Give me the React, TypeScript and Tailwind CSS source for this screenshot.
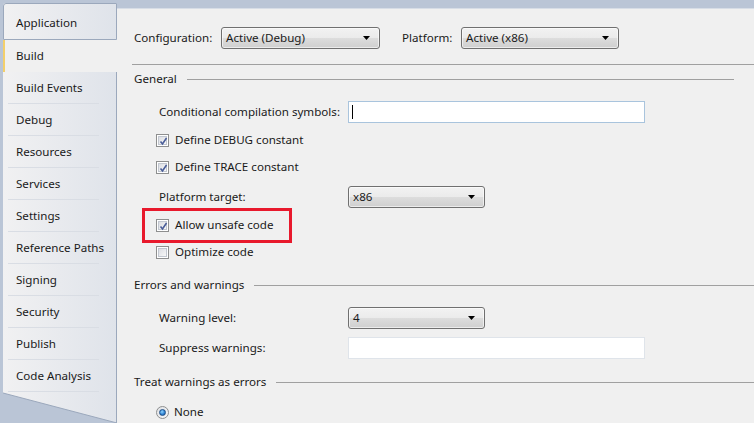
import React from "react";

const tabs = [
  "Application",
  "Build",
  "Build Events",
  "Debug",
  "Resources",
  "Services",
  "Settings",
  "Reference Paths",
  "Signing",
  "Security",
  "Publish",
  "Code Analysis",
];

function Arrow() {
  return (
    <svg width="7" height="4" viewBox="0 0 7 4" className="shrink-0">
      <polygon points="0,0 7,0 3.5,4" fill="#000" />
    </svg>
  );
}

function Select({ value, width }: { value: string; width: string }) {
  return (
    <div
      className={`${width} flex h-[22px] items-center justify-between rounded-[3px] border border-[#707070] bg-[linear-gradient(#f2f2f2,#ebebeb_50%,#dddddd_50%,#cfcfcf)] pl-[4px] pr-[9px] shadow-[inset_0_0_0_1px_rgba(255,255,255,0.6)]`}
    >
      <span>{value}</span>
      <Arrow />
    </div>
  );
}

function Check({ checked }: { checked: boolean }) {
  return (
    <div className="flex h-[13px] w-[13px] shrink-0 items-center justify-center border border-[#8e8f8f] bg-white p-[1px]">
      <div className="relative h-full w-full border border-[#c2c7d0] bg-[linear-gradient(135deg,#dcdee3,#f7f7f7)]">
        {checked && (
          <svg width="9" height="9" viewBox="0 0 9 9" className="absolute left-[0px] top-[0px]">
            <path d="M1.5 4.5 L3.5 7 L7.5 1" stroke="#4a5d98" strokeWidth="1.6" fill="none" />
          </svg>
        )}
      </div>
    </div>
  );
}

function CheckRow({ label, checked }: { label: string; checked: boolean }) {
  return (
    <div className="flex h-[20px] items-center gap-[6px] pl-[39px]">
      <Check checked={checked} />
      <span>{label}</span>
    </div>
  );
}

function Heading({ label, lineRight }: { label: string; lineRight: string }) {
  return (
    <div className={`flex h-[14px] items-center gap-[10px] pl-[17px] ${lineRight}`}>
      <span className="whitespace-nowrap">{label}</span>
      <div className="h-px flex-1 bg-[#a0a0a0]" />
    </div>
  );
}

export default function App() {
  return (
    <div className="flex h-[423px] w-[754px] overflow-hidden bg-[#bac5d6] text-[11.6px] leading-none text-[#1a1a1a] [font-family:'Noto_Sans',sans-serif]">
      {/* tab column */}
      <div className="flex w-[117px] shrink-0 flex-col pl-[3px] pt-[3px]">
        <div className="flex flex-col rounded-tl-[3px] bg-[linear-gradient(90deg,#f1f1f2,#dfe3ea)]">
          {tabs.map((t, i) => {
            if (t === "Application")
              return (
                <div
                  key={t}
                  className="flex h-[37px] items-center rounded-tl-[3px] border-b border-l border-r border-t border-[#9ba8bc] pl-[12px] pt-[3px]"
                >
                  {t}
                </div>
              );
            if (t === "Build")
              return (
                <div
                  key={t}
                  className="-mr-px flex h-[32px] items-center border-l-2 border-[#f3cf6a] bg-[#f0f0f0] pl-[11px]"
                >
                  {t}
                </div>
              );
            return (
              <div key={t} className="flex h-[32px] flex-col border-r border-[#9ba8bc]">
                <div className="flex flex-1 items-center pl-[13px]">{t}</div>
                {i < tabs.length && <div className="mx-[5px] mr-[17px] h-px bg-[#d9dde4]" />}
              </div>
            );
          })}
        </div>
        <div className="relative h-[31px] border-r border-[#9ba8bc] bg-[linear-gradient(90deg,#f1f1f2,#dfe3ea)]">
          <svg width="114" height="31" viewBox="0 0 114 31" className="absolute left-0 top-0">
            <polygon points="0,1 114,31 0,31" fill="#bac5d6" />
            <line x1="0" y1="1" x2="114" y2="31" stroke="#9ba8bc" strokeWidth="1" />
          </svg>
        </div>
      </div>

      {/* content panel */}
      <div className="mt-[8px] flex flex-1 flex-col border-t border-[#d7dde6] bg-[#f0f0f0]">
        <div className="mt-[18px] flex items-center pl-[17px]">
          <span className="w-[87px]">Configuration:</span>
          <Select value="Active (Debug)" width="w-[159px]" />
          <span className="ml-[22px] w-[59px]">Platform:</span>
          <Select value="Active (x86)" width="w-[158px]" />
        </div>

        <div className="ml-[15px] mt-[15px] h-px bg-[#a0a0a0]" />

        <div className="mt-[7px]">
          <Heading label="General" lineRight="pr-[20px]" />
        </div>

        <div className="mt-[15px] flex items-center pl-[42px]">
          <span className="w-[189px]">Conditional compilation symbols:</span>
          <div className="flex h-[22px] w-[297px] items-center border border-[#a9c4dd] bg-white pl-[3px]">
            <div className="h-[14px] w-px bg-black" />
          </div>
        </div>

        <div className="mt-[7px]">
          <CheckRow label="Define DEBUG constant" checked />
        </div>
        <div className="mt-[7px]">
          <CheckRow label="Define TRACE constant" checked />
        </div>

        <div className="mt-[9px] flex items-center pl-[42px]">
          <span className="w-[189px]">Platform target:</span>
          <Select value="x86" width="w-[137px]" />
        </div>

        <div className="relative mt-[7px]">
          <CheckRow label="Allow unsafe code" checked />
          <div className="absolute left-[25px] top-[-7px] h-[35px] w-[150px] border-[3px] border-[#e8192c]" />
        </div>
        <div className="mt-[7px]">
          <CheckRow label="Optimize code" checked={false} />
        </div>

        <div className="mt-[16px]">
          <Heading label="Errors and warnings" lineRight="" />
        </div>

        <div className="mt-[15px] flex items-center pl-[42px]">
          <span className="w-[189px]">Warning level:</span>
          <Select value="4" width="w-[137px]" />
        </div>

        <div className="mt-[8px] flex items-center pl-[42px]">
          <span className="w-[189px]">Suppress warnings:</span>
          <div className="h-[22px] w-[297px] border border-[#dfe4ea] bg-white" />
        </div>

        <div className="mt-[16px]">
          <Heading label="Treat warnings as errors" lineRight="" />
        </div>

        <div className="mt-[13px] flex h-[20px] items-center gap-[5px] pl-[39px]">
          <div className="flex h-[13px] w-[13px] items-center justify-center rounded-full border border-[#8e8f8f] bg-[linear-gradient(135deg,#e0e2e6,#f8f8f8)]">
            <div className="h-[7px] w-[7px] rounded-full border border-[#1f4f87] bg-[radial-gradient(circle_at_40%_35%,#8fd4ff,#2c7fd0_60%,#1a5aa0)]" />
          </div>
          <span>None</span>
        </div>
      </div>
    </div>
  );
}
